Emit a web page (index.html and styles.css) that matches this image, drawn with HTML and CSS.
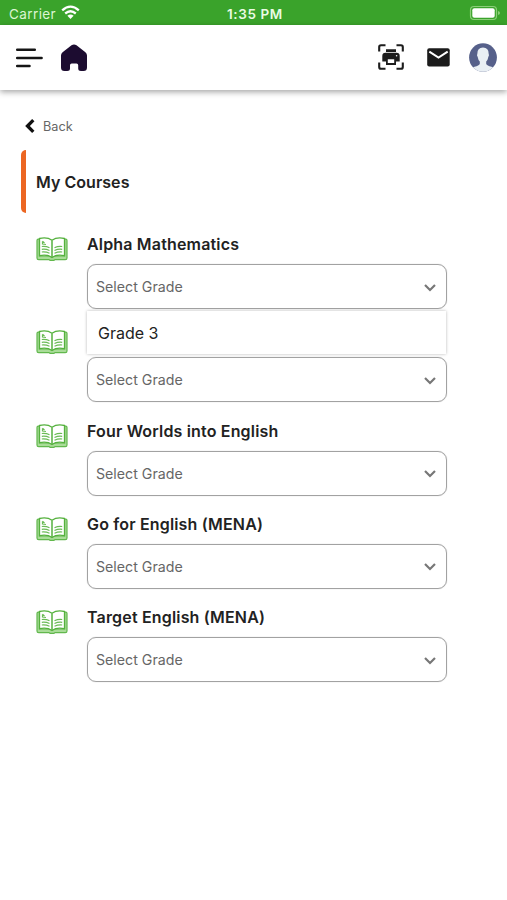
FILE: index.html
```html
<!DOCTYPE html>
<html lang="en">
<head>
<meta charset="utf-8">
<title>My Courses</title>
<link rel="stylesheet" href="styles.css">
</head>
<body>
<svg class="defs" width="0" height="0">
  <symbol id="book" viewBox="0 0 32 24">
    <path d="M3.5 2.2H2.2Q1 2.2 1 3.5V21Q1 22.6 2.7 22.6H13l1 .7h4l1-.7h10.3q1.7 0 1.7-1.6V3.5q0-1.3-1.2-1.3h-1.3V19H3.5z" fill="#a9dc98" stroke="#62b84d" stroke-width="1.2"/>
    <path d="M16 3.2C12.5.8 8 .5 3.5 1.5V18.7C8 17.8 12.5 18 16 20.5C19.5 18 24 17.8 28.5 18.7V1.5C24 .5 19.5.8 16 3.2Z" fill="#fff" stroke="#55b13e" stroke-width="1.3"/>
    <path d="M16 3.5V20.5" stroke="#55b13e" stroke-width="1.5"/>
    <path d="M6.5 4.2V7L10 7.5M6.5 4.2L8.5 6M5.8 9.5Q10 9 13.5 10.7M5.8 12.3Q10 11.8 13.5 13.5M5.8 15Q10 14.6 13.5 16.2M18.5 10.7Q22 9 26.2 9.5M18.5 13.5Q22 11.8 26.2 12.3M18.5 16.2Q22 14.6 26.2 15" fill="none" stroke="#6abb55" stroke-width="1.2"/>
  </symbol>
  <symbol id="chevron" viewBox="0 0 14 10">
    <path d="M2 2L7 7L12 2" fill="none" stroke="#777" stroke-width="2.2"/>
  </symbol>
</svg>

<div class="status">
  <span class="carrier">Carrier
    <svg width="19" height="15" viewBox="0 0 19 15" fill="none" stroke="#fff" stroke-width="2.3"><path d="M1.2 5.3Q9.5-2 17.8 5.3M4.2 8.5Q9.5 4 14.8 8.5"/><path d="M6.4 10.7Q9.5 8.2 12.6 10.7L9.5 14Z" fill="#fff" stroke="none"/></svg>
  </span>
  <span class="clock">1:35 PM</span>
  <svg class="battery" width="32" height="16" viewBox="0 0 32 16"><rect x="1.5" y="1.5" width="26" height="13" rx="3.5" fill="none" stroke="#8bce78" stroke-width="1.2"/><rect x="3.3" y="3.3" width="22.4" height="9.4" rx="2" fill="#fff"/><path d="M29 6Q31 6.5 31 8T29 10Z" fill="#8bce78"/></svg>
</div>

<header class="bar">
  <svg class="menu" width="28" height="22" viewBox="0 0 28 22" stroke="#151515" stroke-width="2.5" stroke-linecap="round"><path d="M2.2 2.7H19.8M2.2 10.9H26.6M2.2 18.9H14.5"/></svg>
  <svg class="home" width="28" height="29" viewBox="0 0 28 29"><path d="M1 12.500Q1 10.500 2.600 9.200L11.500 2.200Q14 .6 16.500 2.200L25.400 9.200Q27 10.500 27 12.500V24.500Q27 28 23.500 28H21Q18.200 28 18.200 25.500V22.300Q18.200 20.600 16.500 20.600H11.700Q10 20.600 10 22.300V25.500Q10 28 7.200 28H4.500Q1 28 1 24.500Z" fill="#1c0c30"/></svg>
  <svg class="scan" width="26" height="26" viewBox="0 0 26 26"><path d="M1.2 7.5V3Q1.2 1.2 3 1.2H7.5M18.5 1.2H23Q24.8 1.2 24.8 3V7.5M24.8 18.5V23Q24.8 24.800 23 24.800H18.500M7.500 24.800H3Q1.200 24.800 1.200 23V18.500" fill="none" stroke="#1d1d1d" stroke-width="2.100"/><path d="M8 5.200H18V8H8ZM7.500 8.800H18.500Q21.700 8.800 21.700 12V17.500H18V14H8V17.500H4.300V12Q4.300 8.800 7.500 8.800Z" fill="#1d1d1d"/><path d="M8.900 14.300H17.100V20H8.900Z" fill="#fff" stroke="#1d1d1d" stroke-width="1.800"/><circle cx="18.600" cy="11.800" r=".8" fill="#fff"/></svg>
  <svg class="mail" width="23" height="19" viewBox="0 0 23 19"><rect x=".2" y=".3" width="22.5" height="18.2" rx="2" fill="#1b1b1b"/><path d="M2.3 3.6L11.5 9.500L20.700 3.600" fill="none" stroke="#fff" stroke-width="2"/></svg>
  <svg class="avatar" width="28" height="29" viewBox="0 0 28 29"><clipPath id="face"><ellipse cx="14" cy="14.5" rx="13.9" ry="14.3"/></clipPath><g clip-path="url(#face)"><path d="M0 0H28V29H0Z" fill="#56608a"/><path d="M14 4.5Q8.200 4.500 8.300 11Q7.500 12 8.700 14Q9.300 17.500 10.800 18.500V21Q10 22.500 5.500 23.800Q3 24.500 1 29H27Q25 24.500 22.500 23.800Q18 22.500 17.200 21V18.500Q18.700 17.500 19.300 14Q20.500 12 19.700 11Q19.800 4.500 14 4.500Z" fill="#e9eff4"/></g></svg>
</header>

<main>
  <a class="back"><svg width="12" height="16" viewBox="0 0 12 16"><path d="M9.3 2.2L3.5 8L9.3 13.8" fill="none" stroke="#111" stroke-width="3.3"/></svg><span>Back</span></a>
  <h1>My Courses</h1>

  <section class="courses">
    <article class="course">
      <svg class="book"><use href="#book"/></svg>
      <div class="body"><h2>Alpha Mathematics</h2>
        <div class="select"><span>Select Grade</span><svg class="chev"><use href="#chevron"/></svg>
          <div class="menu-list">Grade 3</div></div></div>
    </article>
    <article class="course">
      <svg class="book"><use href="#book"/></svg>
      <div class="body"><h2></h2>
        <div class="select"><span>Select Grade</span><svg class="chev"><use href="#chevron"/></svg></div></div>
    </article>
    <article class="course">
      <svg class="book"><use href="#book"/></svg>
      <div class="body"><h2>Four Worlds into English</h2>
        <div class="select"><span>Select Grade</span><svg class="chev"><use href="#chevron"/></svg></div></div>
    </article>
    <article class="course">
      <svg class="book"><use href="#book"/></svg>
      <div class="body"><h2>Go for English (MENA)</h2>
        <div class="select"><span>Select Grade</span><svg class="chev"><use href="#chevron"/></svg></div></div>
    </article>
    <article class="course">
      <svg class="book"><use href="#book"/></svg>
      <div class="body"><h2>Target English (MENA)</h2>
        <div class="select"><span>Select Grade</span><svg class="chev"><use href="#chevron"/></svg></div></div>
    </article>
  </section>
</main>
</body>
</html>
```
FILE: styles.css
```css
* { box-sizing: border-box; }
body {
  margin: 0;
  height: 900px;
  overflow: hidden;
  background: #fff;
  color: #222;
  font-family: Inter, "Liberation Sans", sans-serif;
}
svg { display: block; flex: none; }
.defs { position: absolute; }
.status {
  display: grid;
  grid-template-columns: 1fr auto 1fr;
  align-items: center;
  height: 25px;
  padding: 2px 6px 0 9px;
  background: #3aa32b;
  color: #fff;
  font-size: 13px;
}
.carrier { display: flex; align-items: center; gap: 5px; color: #dcf5d3; font-size: 13.5px; letter-spacing: .4px; }
.carrier svg { margin-top: -2px; }
.clock { font-size: 13.5px; font-weight: 600; color: #eafbe4; letter-spacing: .6px; }
.battery { justify-self: end; margin-top: -2px; }
.bar {
  display: flex;
  align-items: center;
  height: 65px;
  padding: 0 10px 0 15px;
  background: #fff;
  box-shadow: 0 2px 6px rgba(0, 0, 0, .36);
}
.home { margin-left: 17px; }
.scan { margin-left: auto; margin-top: -1px; }
.mail { margin-left: 23px; }
.avatar { margin-left: 19px; }
main { padding: 27px 60px 0 21px; }
.back {
  display: flex;
  align-items: center;
  gap: 7px;
  height: 18px;
  padding-left: 3px;
  color: #666;
  font-size: 12.7px;
}
h1 {
  display: flex;
  align-items: center;
  height: 63px;
  margin: 15px 0 0;
  padding-left: 10px;
  border-left: 5px solid #ec6622;
  border-radius: 5px 0 0 5px;
  font-size: 16px;
  font-weight: 600;
  letter-spacing: .04px;
}
.courses { padding: 18px 0 0 15px; }
.course { display: flex; height: 93.3px; gap: 19px; }
.book { width: 32px; height: 24px; margin-top: 6px; }
.body { flex: 1; }
h2 {
  height: 28px;
  margin: 0 0 5px;
  font-size: 16px;
  line-height: 27px;
  font-weight: 600;
  letter-spacing: .17px;
  white-space: nowrap;
}
.select {
  position: relative;
  display: flex;
  align-items: center;
  justify-content: space-between;
  height: 45px;
  padding: 0 9px 0 8px;
  border: 1px solid #a2a2a2;
  border-radius: 9px;
  box-shadow: 0 0 1px #b5b5b5;
  color: #666;
  font-size: 14.2px;
}
.chev { width: 14px; height: 10px; margin-top: 2px; }
.menu-list {
  position: absolute;
  z-index: 1;
  top: 46px;
  left: -1px;
  right: 0;
  height: 43px;
  padding-left: 11px;
  background: #fff;
  box-shadow: 0 0 3px rgba(0, 0, 0, .28);
  color: #222;
  font-size: 16px;
  line-height: 45px;
}
```
